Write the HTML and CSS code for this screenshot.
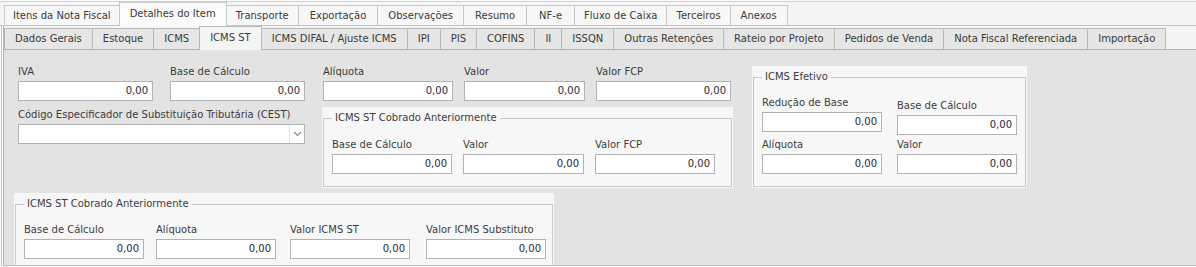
FILE: index.html
```html
<!DOCTYPE html>
<html lang="pt-BR">
<head>
<meta charset="utf-8">
<title>Detalhes do Item - ICMS ST</title>
<link rel="stylesheet" href="styles.css">
</head>
<body>
<div class="win">
  <div class="otabs">
    <div class="otab first">Itens da Nota Fiscal</div>
    <div class="otab active">Detalhes do Item</div>
    <div class="otab narrow">Transporte</div>
    <div class="otab wide">Exportação</div>
    <div class="otab">Observações</div>
    <div class="otab wide">Resumo</div>
    <div class="otab wider">NF-e</div>
    <div class="otab narrow">Fluxo de Caixa</div>
    <div class="otab narrow">Terceiros</div>
    <div class="otab">Anexos</div>
  </div>
  <div class="opage">
    <div class="inner">
      <div class="itabs">
        <div class="itab">Dados Gerais</div>
        <div class="itab">Estoque</div>
        <div class="itab">ICMS</div>
        <div class="itab active">ICMS ST</div>
        <div class="itab">ICMS DIFAL / Ajuste ICMS</div>
        <div class="itab">IPI</div>
        <div class="itab">PIS</div>
        <div class="itab">COFINS</div>
        <div class="itab">II</div>
        <div class="itab">ISSQN</div>
        <div class="itab">Outras Retenções</div>
        <div class="itab">Rateio por Projeto</div>
        <div class="itab">Pedidos de Venda</div>
        <div class="itab">Nota Fiscal Referenciada</div>
        <div class="itab">Importação</div>
      </div>
      <div class="ipage">
        <div class="toprow">
          <div class="colA">
            <div class="grid gA">
              <div class="field"><div class="lbl">IVA</div><div class="inp">0,00</div></div>
              <div class="field"><div class="lbl">Base de Cálculo</div><div class="inp">0,00</div></div>
            </div>
            <div class="field cest">
              <div class="lbl">Código Especificador de Substituição Tributária (CEST)</div>
              <div class="combo">
                <div class="combo-text"></div>
                <div class="combo-btn">
                  <svg width="9" height="6" viewBox="0 0 9 6"><path d="M1 1 L4.5 4.5 L8 1" fill="none" stroke="#8a8a8a" stroke-width="1.2"/></svg>
                </div>
              </div>
            </div>
          </div>
          <div class="colB">
            <div class="grid gB">
              <div class="field"><div class="lbl">Alíquota</div><div class="inp">0,00</div></div>
              <div class="field"><div class="lbl">Valor</div><div class="inp">0,00</div></div>
              <div class="field"><div class="lbl">Valor FCP</div><div class="inp">0,00</div></div>
            </div>
            <div class="group gmid">
              <fieldset>
                <legend>ICMS ST Cobrado Anteriormente</legend>
                <div class="grid gM">
                  <div class="field"><div class="lbl">Base de Cálculo</div><div class="inp">0,00</div></div>
                  <div class="field"><div class="lbl">Valor</div><div class="inp">0,00</div></div>
                  <div class="field"><div class="lbl">Valor FCP</div><div class="inp">0,00</div></div>
                </div>
              </fieldset>
            </div>
          </div>
          <div class="group gefet">
            <fieldset>
              <legend>ICMS Efetivo</legend>
              <div class="grid gE">
                <div class="field"><div class="lbl">Redução de Base</div><div class="inp">0,00</div></div>
                <div class="field shift"><div class="lbl">Base de Cálculo</div><div class="inp">0,00</div></div>
                <div class="field"><div class="lbl">Alíquota</div><div class="inp">0,00</div></div>
                <div class="field"><div class="lbl">Valor</div><div class="inp">0,00</div></div>
              </div>
            </fieldset>
          </div>
        </div>
        <div class="group gbot">
          <fieldset>
            <legend>ICMS ST Cobrado Anteriormente</legend>
            <div class="grid g4">
              <div class="field"><div class="lbl">Base de Cálculo</div><div class="inp">0,00</div></div>
              <div class="field"><div class="lbl">Alíquota</div><div class="inp">0,00</div></div>
              <div class="field"><div class="lbl">Valor ICMS ST</div><div class="inp">0,00</div></div>
              <div class="field"><div class="lbl">Valor ICMS Substituto</div><div class="inp">0,00</div></div>
            </div>
          </fieldset>
        </div>
      </div>
    </div>
  </div>
</div>
</body>
</html>
```

FILE: styles.css
```css
* { box-sizing: border-box; }
html, body { margin: 0; padding: 0; }
body {
  background: #fbfbfb;
  font-family: "DejaVu Sans", Verdana, sans-serif;
  font-size: 10px;
  color: #333;
  width: 1196px;
  height: 267px;
  overflow: hidden;
}
.win { padding-top: 1px; }

/* outer tabs */
.otabs {
  display: flex;
  align-items: flex-end;
  height: 25px;
  padding-left: 4px;
  background: #f5f5f5;
  border-top: 1px solid #d2d2d2;
  border-bottom: 1px solid #c4c4c4;
}
.otab {
  height: 20px;
  line-height: 19px;
  padding: 0 10px;
  margin-right: -1px;
  background: #f7f7f7;
  border: 1px solid #c8c8c8;
  border-bottom: none;
  white-space: nowrap;
  color: #3a3a3a;
}
.otab.first { padding: 0 8px; }
.otab.narrow { padding: 0 9px; }
.otab.wide { padding: 0 11px; }
.otab.wider { padding: 0 12px; }
.otab.active {
  height: 24px;
  line-height: 21px;
  margin-bottom: -1px;
  background: #fbfbfb;
  position: relative;
}

/* outer page */
.opage {
  margin-left: 1px;
  border-left: 1px solid #c8c8c8;
  padding-left: 1px;
}
.inner { border-left: 1px solid #b8b8b8; }

/* inner tabs */
.itabs {
  display: flex;
  align-items: flex-end;
  height: 24px;
  background: #f5f5f5;
  border-bottom: 1px solid #b4b4b4;
}
.itab {
  height: 21px;
  line-height: 20px;
  padding: 0 10px;
  margin-right: -1px;
  background: #e6e6e6;
  border: 1px solid #b9b9b9;
  border-bottom: none;
  white-space: nowrap;
  color: #3a3a3a;
}
.itab.active {
  height: 24px;
  line-height: 21px;
  margin-bottom: -1px;
  background: #f4f4f4;
  position: relative;
}

/* page */
.ipage {
  height: 216px;
  background: #e3e3e3;
  border-bottom: 1px solid #bdbdbd;
  padding: 15px 0 0 10px;
  overflow: hidden;
}
.toprow { display: flex; align-items: flex-start; }
.colA { width: 287px; margin-left: 4px; }
.colB { width: 411px; margin-left: 17px; }

.grid { display: grid; align-items: start; }
.gA { grid-template-columns: 135px 135px; column-gap: 17px; }
.gB { grid-template-columns: 130px 121px 135px; column-gap: 11px; margin-left: 1px; }
.gM { grid-template-columns: 120px 121px 120px; column-gap: 11px; }
.gE { grid-template-columns: 120px 120px; column-gap: 15px; row-gap: 3px; }
.g4 { grid-template-columns: 132px 134px 136px 120px; }
.g4 .inp { width: 120px; }

.field { min-width: 0; }
.lbl {
  height: 14px;
  line-height: 14px;
  margin-bottom: 2px;
  white-space: nowrap;
  color: #3c3c3c;
}
.inp {
  height: 20px;
  line-height: 18px;
  background: #fff;
  border: 1px solid #b2b2b2;
  text-align: right;
  padding-right: 4px;
  color: #262640;
}
.shift { margin-top: 3px; }

.cest { margin-top: 7px; }
.combo {
  display: flex;
  height: 20px;
  background: #fff;
  border: 1px solid #b2b2b2;
}
.combo-text { flex: 1; }
.combo-btn {
  width: 15px;
  border-left: 1px solid #e2e2e2;
  display: flex;
  align-items: center;
  justify-content: center;
}

/* groups */
.group {
  background: #f7f7f7;
  padding: 4px 1px 1px 1px;
}
.group fieldset {
  margin: 0;
  border: 1px solid #c9c9c9;
  padding: 12px 8px 12px 8px;
  min-width: 0;
}
.group legend {
  padding: 0 3px;
  line-height: 14px;
  color: #3c3c3c;
}
.gmid { margin-top: 6px; }
.gmid fieldset { padding-top: 13px; }
.gefet { width: 275px; margin-left: 19px; margin-top: 1px; }
.gbot { width: 540px; margin-top: 5px; }
```
